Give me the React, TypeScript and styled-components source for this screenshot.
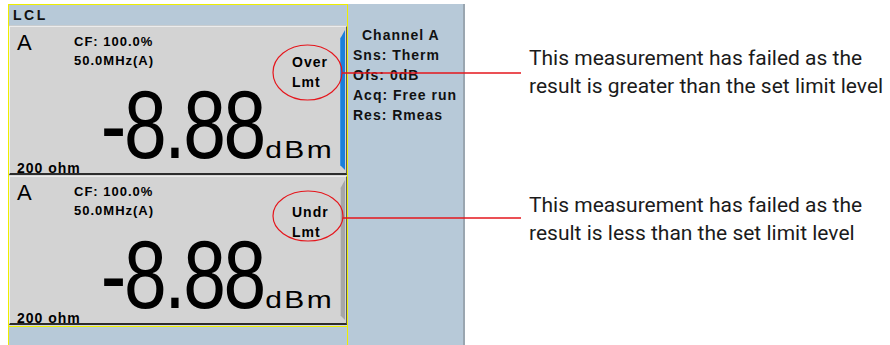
import React from 'react';
import styled, { createGlobalStyle } from 'styled-components';

const GlobalStyle = createGlobalStyle`
	html, body {
		margin: 0;
		padding: 0;
		background: #fff;
	}
	* {
		box-sizing: border-box;
	}
`;

const Page = styled.div`
	position: relative;
	width: 890px;
	height: 345px;
	overflow: hidden;
	display: flex;
	padding: 4px 0 0 8px;
	font-family: 'Liberation Sans', Arial, sans-serif;
`;

const Device = styled.div`
	display: flex;
	width: 457px;
	height: 345px;
	flex-shrink: 0;
`;

const Screen = styled.div`
	width: 340px;
	display: flex;
	flex-direction: column;
	border: 1px solid #eeee00;
	border-bottom: none;
	background: #d8d8d8;
`;

const Header = styled.div`
	height: 21px;
	padding-left: 4px;
	background: #b7c9d8;
	border-bottom: 1px solid #c9cdd0;
	font-size: 14px;
	font-weight: 700;
	line-height: 20px;
	letter-spacing: 2.5px;
	color: #111;
`;

const Panel = styled.div<{ $gap?: number }>`
	height: 149px;
	margin-top: ${(p) => p.$gap || 0}px;
	display: flex;
	background: #d3d3d3;
	border-left: 1px solid #f2f2f2;
	border-top: 1px solid #ececec;
	border-right: 1px solid #5a5a5a;
	border-bottom: 2px solid #2c2c2c;
`;

const PanelBody = styled.div`
	flex: 1;
	display: flex;
	flex-direction: column;
	color: #000;
`;

const TopRow = styled.div`
	display: grid;
	grid-template-columns: 64px 1fr 40px;
	padding: 5px 8px 0 0;
	height: 60px;
`;

const ChannelLetter = styled.div`
	padding-left: 7px;
	font-size: 22px;
	line-height: 22px;
`;

const Settings = styled.div`
	font-size: 13px;
	font-weight: 700;
	line-height: 19px;
	letter-spacing: 1px;
`;

const Status = styled.div`
	margin-top: 20px;
	font-size: 14px;
	font-weight: 700;
	line-height: 20px;
	letter-spacing: 1px;
`;

const Reading = styled.div`
	height: 72px;
	margin-top: 2px;
	display: flex;
	justify-content: flex-end;
	align-items: baseline;
	padding-right: 8px;
	white-space: nowrap;
`;

const Value = styled.span`
	display: inline-block;
	font-size: 96px;
	line-height: 72px;
	letter-spacing: -3px;
	transform: scaleX(0.8);
	transform-origin: right bottom;
	margin-right: 4px;
`;

const Unit = styled.span`
	display: inline-block;
	font-size: 24px;
	line-height: 72px;
	letter-spacing: 2px;
	margin: 0 -2px 0 11px;
	transform: scaleX(1.25);
	transform-origin: right bottom;
`;

const Footnote = styled.div`
	margin-top: auto;
	padding: 0 0 1px 7px;
	font-size: 14px;
	font-weight: 700;
	line-height: 14px;
	letter-spacing: 1px;
`;

const Bar = styled.div<{ $active?: boolean }>`
	width: 5px;
	margin: 3px 1px 3px 0;
	background: ${(p) => (p.$active ? '#1a7fd9' : '#a6a6a6')};
	border-left: 1px solid ${(p) => (p.$active ? '#3c95e6' : '#c4c4c4')};
	clip-path: polygon(0 9px, 100% 0, 100% 100%, 0 calc(100% - 5px));
`;

const Footer = styled.div`
	flex: 1;
	margin-top: 1px;
	background: #b7c9d8;
	border-top: 1px solid #eeee00;
`;

const Info = styled.div`
	width: 117px;
	padding: 21px 0 0 5px;
	background: #b7c9d8;
	border-right: 2px solid #9aa6b0;
	font-size: 14px;
	font-weight: 700;
	line-height: 20px;
	letter-spacing: 1px;
	color: #111;
`;

const InfoTitle = styled.div`
	padding-left: 9px;
`;

const Notes = styled.div`
	margin-left: 64px;
	padding-top: 40px;
	display: flex;
	flex-direction: column;
	gap: 91px;
	font-family: Roboto, 'Liberation Sans', sans-serif;
	font-size: 21px;
	line-height: 28px;
	color: #1b1b1b;
	white-space: nowrap;
`;

const Overlay = styled.svg`
	position: absolute;
	left: 0;
	top: 0;
	pointer-events: none;
`;

type Meas = { status: [string, string]; active?: boolean };

const measurements: Meas[] = [
	{ status: ['Over', 'Lmt'], active: true },
	{ status: ['Undr', 'Lmt'] },
];

const notes = [
	['This measurement has failed as the', 'result is greater than the set limit level'],
	['This measurement has failed as the', 'result is less than the set limit level'],
];

const MeasPanel = ({ m, gap }: { m: Meas; gap?: number }) => (
	<Panel $gap={gap}>
		<PanelBody>
			<TopRow>
				<ChannelLetter>A</ChannelLetter>
				<Settings>
					<div>CF: 100.0%</div>
					<div>50.0MHz(A)</div>
				</Settings>
				<Status>
					<div>{m.status[0]}</div>
					<div>{m.status[1]}</div>
				</Status>
			</TopRow>
			<Reading>
				<Value>-8.88</Value>
				<Unit>dBm</Unit>
			</Reading>
			<Footnote>200 ohm</Footnote>
		</PanelBody>
		<Bar $active={m.active} />
	</Panel>
);

const App = () => {
	return (
		<Page>
			<GlobalStyle />
			<Device>
				<Screen>
					<Header>LCL</Header>
					<MeasPanel m={measurements[0]} />
					<MeasPanel m={measurements[1]} gap={1} />
					<Footer />
				</Screen>
				<Info>
					<InfoTitle>Channel A</InfoTitle>
					<div>Sns: Therm</div>
					<div>Ofs: 0dB</div>
					<div>Acq: Free run</div>
					<div>Res: Rmeas</div>
				</Info>
			</Device>
			<Notes>
				{notes.map((n, i) => (
					<div key={i}>
						<div>{n[0]}</div>
						<div>{n[1]}</div>
					</div>
				))}
			</Notes>
			<Overlay width="890" height="345" viewBox="0 0 890 345">
				<g fill="none" stroke="#e5161c">
					<ellipse cx="307.5" cy="72.5" rx="34.5" ry="27.5" strokeWidth="1.2" />
					<line x1="342" y1="73" x2="521" y2="73" strokeWidth="1.6" />
					<ellipse cx="308" cy="216" rx="35" ry="25" strokeWidth="1.2" />
					<line x1="343" y1="218" x2="521" y2="218" strokeWidth="1.6" />
				</g>
			</Overlay>
		</Page>
	);
};

export default App;
